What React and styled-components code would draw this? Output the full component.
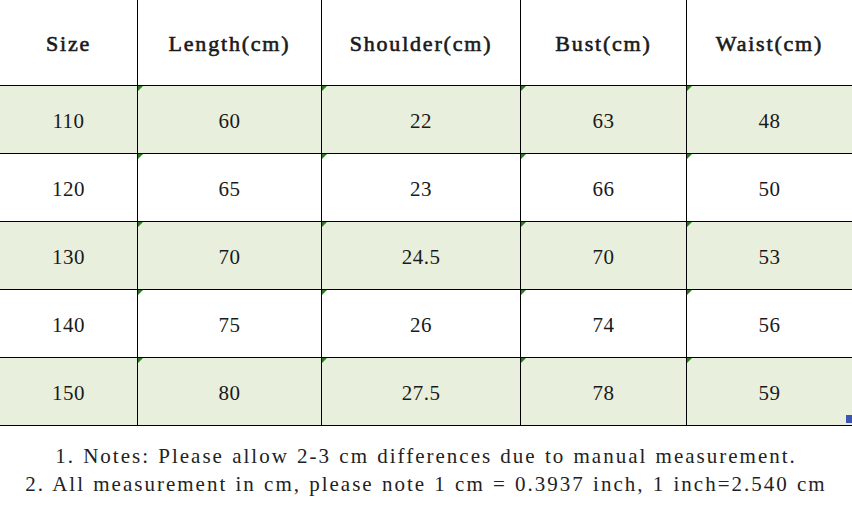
import styled, { createGlobalStyle } from 'styled-components'

const GlobalStyle = createGlobalStyle`
    html, body {
        margin: 0;
        padding: 0;
        background: #fff;
    }
`

const sizes = [
    { size: '110', length: '60', shoulder: '22', bust: '63', waist: '48' },
    { size: '120', length: '65', shoulder: '23', bust: '66', waist: '50' },
    { size: '130', length: '70', shoulder: '24.5', bust: '70', waist: '53' },
    { size: '140', length: '75', shoulder: '26', bust: '74', waist: '56' },
    { size: '150', length: '80', shoulder: '27.5', bust: '78', waist: '59' },
]

const headers = ['Size', 'Length(cm)', 'Shoulder(cm)', 'Bust(cm)', 'Waist(cm)']

const Page = styled.div`
    width: 852px;
    height: 507px;
    position: relative;
    overflow: hidden;
    color: #1a1a1a;
`

const Tabela = styled.div`
    display: grid;
    grid-template-columns: 138px 184px 199px 166px 165px;
    grid-template-rows: 86px repeat(5, 68px);
`

const Celula = styled.div`
    box-sizing: border-box;
    position: relative;
    display: flex;
    align-items: center;
    justify-content: center;
    border-bottom: 1px solid #000;
    border-right: ${props => props.$ultima ? 'none' : '1px solid #000'};
    background: ${props => props.$verde ? '#e9efdd' : '#fff'};
`

const Cabecalho = styled(Celula)`
    font-family: "Liberation Serif", serif;
    font-size: 22px;
    letter-spacing: 1.8px;
    -webkit-text-stroke: 0.6px #1a1a1a;
    padding-top: 2px;
`

const Numero = styled(Celula)`
    font-family: "Liberation Serif", serif;
    font-size: 21px;
    letter-spacing: 0.5px;
    padding-top: 3px;
`

const Marcador = styled.span`
    position: absolute;
    left: 0;
    top: 0;
    width: 0;
    height: 0;
    border-top: 5px solid #2a7a1e;
    border-right: 5px solid transparent;
`

const Alca = styled.span`
    position: absolute;
    right: 0;
    top: 415px;
    width: 6px;
    height: 8px;
    background: #3b55b0;
`

const Notas = styled.div`
    padding-top: 16px;
    font-family: "Liberation Serif", serif;
    font-size: 21px;
    letter-spacing: 2px;
    word-spacing: 1px;
    line-height: 28px;
    text-align: center;
    color: #222;
    white-space: nowrap;
`

function App() {
    return (
        <Page>
            <GlobalStyle />
            <Tabela>
                { headers.map( (titulo, index) => (
                    <Cabecalho key={titulo} $ultima={index === headers.length - 1}>{titulo}</Cabecalho>
                )) }
                { sizes.map( (linha, i) => {
                    const valores = [linha.size, linha.length, linha.shoulder, linha.bust, linha.waist]
                    return valores.map( (valor, index) => (
                        <Numero key={i + '-' + index} $verde={i % 2 === 0} $ultima={index === valores.length - 1}>
                            { index > 0 && <Marcador /> }
                            {valor}
                        </Numero>
                    ))
                }) }
            </Tabela>
            <Alca />
            <Notas>
                <div>1. Notes: Please allow 2-3 cm differences due to manual measurement.</div>
                <div>2. All measurement in cm, please note 1 cm = 0.3937 inch, 1 inch=2.540 cm</div>
            </Notas>
        </Page>
    )
}

export default App
